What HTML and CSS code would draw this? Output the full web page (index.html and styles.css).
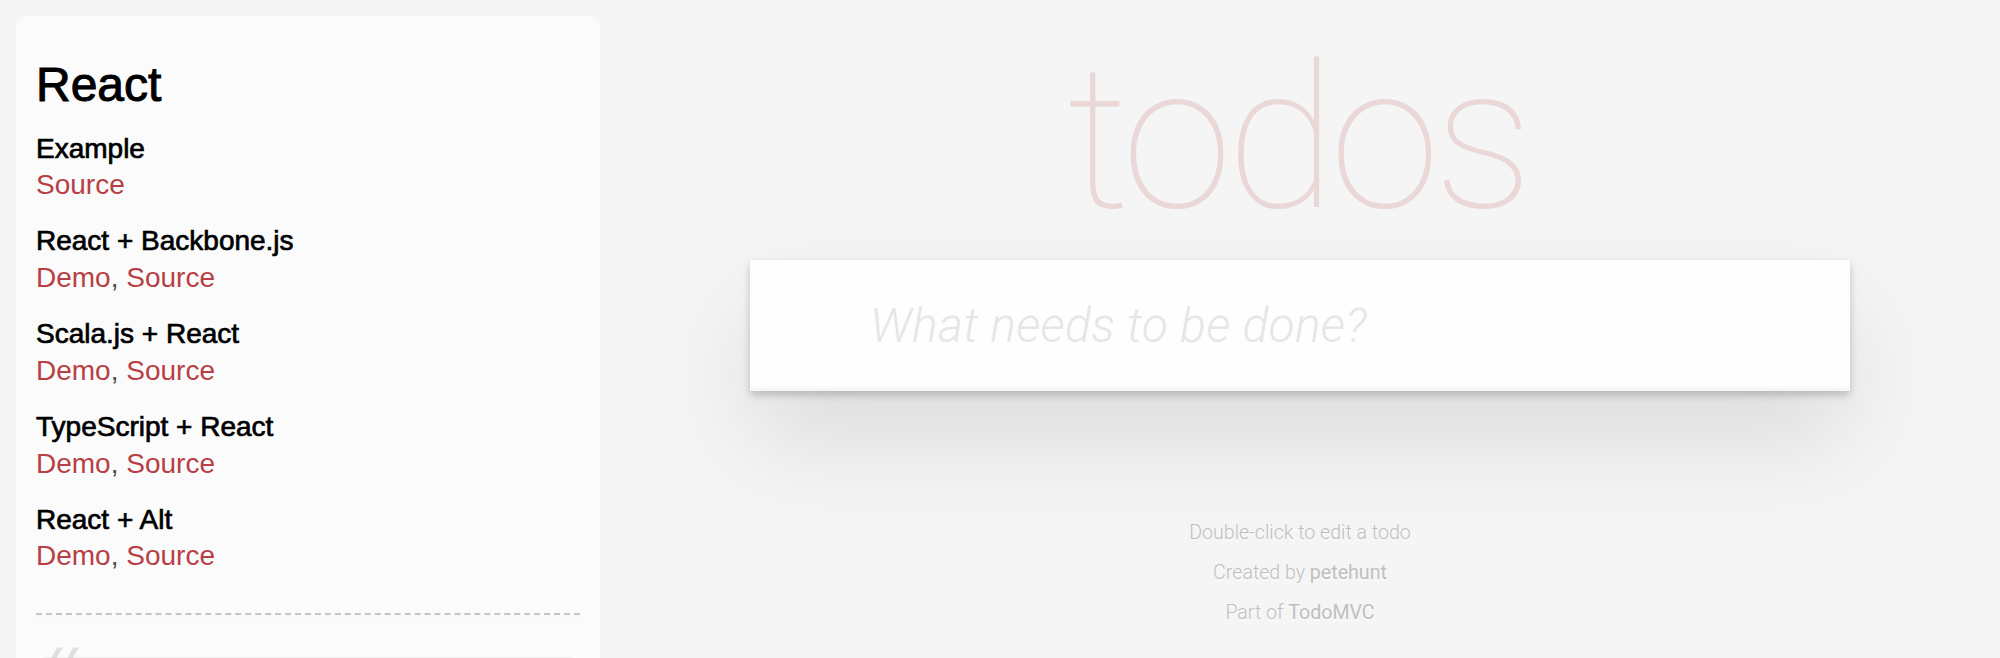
FILE: index.html
```html
<!DOCTYPE html>
<html lang="en">
<head>
<meta charset="utf-8">
<title>React • TodoMVC</title>
<link rel="stylesheet" href="styles.css">
</head>
<body>
<div class="page">
  <aside class="learn">
    <header>
      <h3 class="learn-title">React</h3>
      <div class="source-links">
        <h5 class="group-title">Example</h5>
        <div class="links"><a href="#">Source</a></div>
      </div>
      <div class="source-links">
        <h5 class="group-title">React + Backbone.js</h5>
        <div class="links"><a href="#">Demo</a>, <a href="#">Source</a></div>
      </div>
      <div class="source-links">
        <h5 class="group-title">Scala.js + React</h5>
        <div class="links"><a href="#">Demo</a>, <a href="#">Source</a></div>
      </div>
      <div class="source-links">
        <h5 class="group-title">TypeScript + React</h5>
        <div class="links"><a href="#">Demo</a>, <a href="#">Source</a></div>
      </div>
      <div class="source-links">
        <h5 class="group-title">React + Alt</h5>
        <div class="links"><a href="#">Demo</a>, <a href="#">Source</a></div>
      </div>
    </header>
    <hr class="divider">
    <blockquote class="quote">
      <p class="quote-text"></p>
    </blockquote>
  </aside>

  <main class="main">
    <section class="column">
      <h1 class="title">todos</h1>
      <div class="todoapp">
        <input class="new-todo" type="text" placeholder="What needs to be done?">
      </div>
      <footer class="info">
        <p class="info-line">Double-click to edit a todo</p>
        <p class="info-line">Created by <a href="#">petehunt</a></p>
        <p class="info-line">Part of <a href="#">TodoMVC</a></p>
      </footer>
    </section>
  </main>
</div>
</body>
</html>
```

FILE: styles.css
```css
html, body {
  margin: 0;
  padding: 0;
  height: 100%;
  overflow: hidden;
}

body {
  background: #f5f5f5;
  color: #4d4d4d;
  font-family: "Liberation Sans", Arial, sans-serif;
  font-size: 28px;
  line-height: 39.2px;
  font-weight: 300;
}

.page {
  display: flex;
  align-items: flex-start;
}

/* ---------- sidebar ---------- */
.learn {
  flex: 0 0 544px;
  margin: 16px 0 0 16px;
  padding: 20px;
  border-radius: 10px;
  background: rgba(255, 255, 255, 0.6);
}

.learn-title {
  margin: 20px 0 18px;
  font-size: 48px;
  line-height: 57.6px;
  font-weight: 400;
  -webkit-text-stroke: 1px #000;
  color: #000;
}

.group-title {
  margin: 20px 0 0;
  font-size: 28px;
  line-height: 33.6px;
  font-weight: 400;
  -webkit-text-stroke: 0.7px #000;
  color: #000;
}

.learn-title + .source-links .group-title {
  margin-top: 0;
}

.links {
  line-height: 39.2px;
  color: #4d4d4d;
}

.links a {
  color: #b83f45;
  text-decoration: none;
  font-weight: 400;
}

.divider {
  margin: 37px 0 40px;
  border: 0;
  border-top: 2px dashed #c5c5c5;
  border-bottom: 2px dashed #f7f7f7;
}

.quote {
  position: relative;
  margin: 40px 0 120px;
  padding: 20px;
  min-height: 160px;
  border-radius: 10px;
  background: rgba(0, 0, 0, 0.04);
}

.quote-text {
  margin: 0;
  font-size: 30px;
  line-height: 1.3;
  font-style: italic;
  font-weight: 300;
}

.quote-text::before {
  content: "\201C";
  position: absolute;
  top: -40px;
  left: 6px;
  font-size: 100px;
  line-height: 1.3;
  opacity: 0.15;
}

/* ---------- main app ---------- */
.main {
  flex: 1;
  display: flex;
  justify-content: center;
}

.column {
  width: 1100px;
  padding-top: 39px;
}

.title {
  margin: 0 0 21px;
  height: 200px;
  font-family: Roboto, "Liberation Sans", sans-serif;
  font-size: 200px;
  line-height: 200px;
  font-weight: 100;
  letter-spacing: -6px;
  text-indent: -6px;
  text-align: center;
  color: rgba(175, 47, 47, 0.15);
}

.todoapp {
  background: #fff;
  box-shadow: 0 4px 8px 0 rgba(0, 0, 0, 0.2), 0 50px 100px 0 rgba(0, 0, 0, 0.1);
}

.new-todo {
  display: block;
  width: 100%;
  box-sizing: border-box;
  margin: 0;
  padding: 32px 32px 32px 120px;
  border: none;
  outline: none;
  background: rgba(0, 0, 0, 0.003);
  box-shadow: inset 0 -4px 2px rgba(0, 0, 0, 0.03);
  font-family: Roboto, "Liberation Sans", sans-serif;
  font-size: 48px;
  line-height: 67.2px;
  font-weight: 300;
  letter-spacing: 0.3px;
  color: #4d4d4d;
}

.new-todo::placeholder {
  font-style: italic;
  font-weight: 300;
  color: #e6e6e6;
}

.info {
  margin-top: 132px;
  display: flex;
  flex-direction: column;
  gap: 20px;
  font-family: Roboto, "Liberation Sans", sans-serif;
  font-size: 19.6px;
  font-weight: 300;
  color: #bfbfbf;
  text-align: center;
  text-shadow: 0 2px 0 rgba(255, 255, 255, 0.5);
}

.info-line {
  margin: 0;
  line-height: 20px;
}

.info a {
  color: inherit;
  text-decoration: none;
  font-weight: 400;
}
```
